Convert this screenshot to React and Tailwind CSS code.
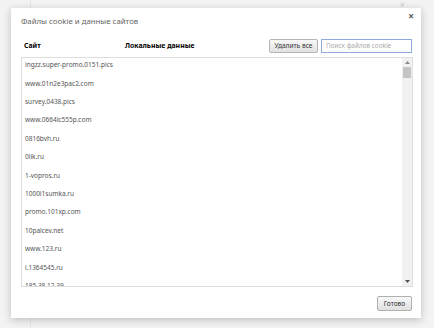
const sites = [
  'ingzz.super-promo.0151.pics',
  'www.01n2e3pac2.com',
  'survey.0438.pics',
  'www.0664ic555p.com',
  '0816bvh.ru',
  '0lik.ru',
  '1-vopros.ru',
  '1000i1sumka.ru',
  'promo.101xp.com',
  '10palcev.net',
  'www.123.ru',
  'i.1364545.ru',
  '185.38.12.39',
];

const Scrollbar = () => (
  <div className="flex w-[10px] shrink-0 flex-col items-center bg-[#f1f1f1]">
    <div className="flex h-[9px] w-full items-center justify-center">
      <svg width="5" height="3" viewBox="0 0 5 3">
        <path d="M0 3 L2.5 0 L5 3 Z" fill="#8a8a8a" />
      </svg>
    </div>
    <div className="h-[11px] w-[8px] bg-[#c4c4c4]" />
    <div className="flex-1" />
    <div className="flex h-[9px] w-full items-center justify-center">
      <svg width="5" height="3" viewBox="0 0 5 3">
        <path d="M0 0 L2.5 3 L5 0 Z" fill="#505050" />
      </svg>
    </div>
  </div>
);

export default function App() {
  return (
    <div
      className="relative h-[328px] w-[434px] overflow-hidden bg-[#f3f3f3] pl-[11px] pt-[8px]"
      style={{ fontFamily: '"Noto Sans", "Open Sans", Arial, sans-serif' }}
    >
      {/* dimmed page behind the overlay */}
      <div className="absolute left-[30px] top-0 h-full w-px bg-[#e6e6e6]" />
      <div className="absolute left-[400px] top-[0px] text-[8px] leading-[10px] text-[#c8c8c8]">×</div>

      <div className="relative flex h-[310px] w-[410px] flex-col bg-white shadow-[0_2px_8px_rgba(0,0,0,0.22)]">
        <div className="flex h-[27px] items-start justify-between pl-[10px] pr-[7px]">
          <span className="mt-[7px] text-[7.8px] leading-[12px] text-[#666]">Файлы cookie и данные сайтов</span>
          <span className="mt-[3px] text-[10px] font-bold leading-[10px] text-[#555]">×</span>
        </div>

        <div className="flex h-[22px] items-center pl-[13px] pr-[9px]">
          <span className="w-[101px] text-[6.9px] font-bold text-black">Сайт</span>
          <span className="flex-1 text-[6.9px] font-bold text-black">Локальные данные</span>
          <button className="h-[14px] w-[49px] rounded-[2px] border border-[#b5b5b5] bg-gradient-to-b from-[#f8f8f8] to-[#e2e2e2] text-[6.6px] leading-[12px] text-[#333]">
            Удалить все
          </button>
          <div className="ml-[3px] flex h-[14px] w-[91px] items-center border border-[#8fa9e0] px-[4px] text-[6.4px] text-[#aaa]">
            Поиск файлов cookie
          </div>
        </div>

        <div className="ml-[10px] mr-[8px] flex h-[230px] border border-[#dedede]">
          <div className="-mt-[2px] flex-1 overflow-hidden pl-[3px]">
            {sites.map((s) => (
              <div key={s} className="flex h-[18.4px] items-center text-[6.5px] text-[#555]">
                {s}
              </div>
            ))}
          </div>
          <Scrollbar />
        </div>

        <div className="flex flex-1 items-center justify-end pr-[9px] pt-[2px]">
          <button className="h-[15px] w-[35px] rounded-[2px] border border-[#b0b0b0] bg-gradient-to-b from-[#f8f8f8] to-[#e0e0e0] text-[6.6px] leading-[13px] text-[#333]">
            Готово
          </button>
        </div>
      </div>
    </div>
  );
}
